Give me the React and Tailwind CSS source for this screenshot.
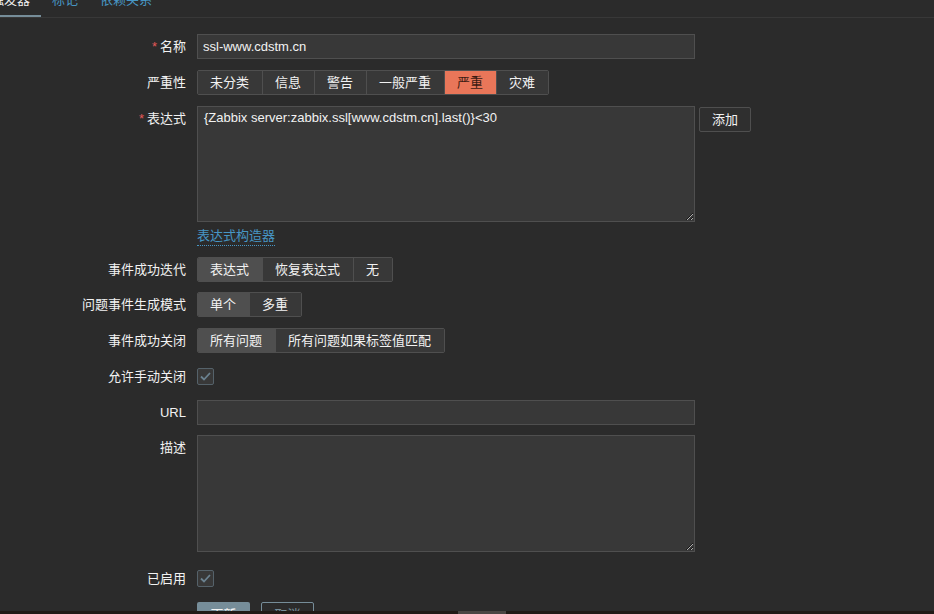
import React from 'react'

const font = { fontFamily: '"Liberation Sans", Arial, "Noto Sans CJK SC", sans-serif' }

const Label = ({ text, required, className = '' }) => (
  <div className={`w-[186px] shrink-0 text-right text-[13px] leading-[25px] text-[#f2f2f2] ${className}`}>
    {required && <span className="text-[#e45959] mr-[3px]">*</span>}
    {text}
  </div>
)

const Segmented = ({ items, active, activeClass = 'bg-[#4f4f4f]' }) => (
  <div className="flex h-[25px] rounded-[2px] border border-[#4f4f4f] overflow-hidden">
    {items.map((item, i) => (
      <div
        key={item}
        className={`pl-[12px] pr-[13px] leading-[23px] text-[13px] ${i > 0 ? 'border-l border-[#4f4f4f]' : ''} ${
          i === active ? activeClass : 'bg-[#383838] text-[#f2f2f2]'
        }`}
      >
        {item}
      </div>
    ))}
  </div>
)

const Checkbox = () => (
  <div className="w-[17px] h-[17px] rounded-[2px] border border-[#55626a] bg-[#383838] flex items-center justify-center">
    <svg width="11" height="9" viewBox="0 0 11 9" fill="none">
      <path d="M1 4.5 L4 7.5 L10 1" stroke="#6b8290" strokeWidth="1.8" />
    </svg>
  </div>
)

export default function App() {
  return (
    <div className="relative w-[934px] h-[614px] overflow-hidden bg-[#2b2b2b] text-[#f2f2f2]" style={font}>
      {/* tabs */}
      <div className="flex -mt-[8px] border-b border-[#383838]">
        <div className="-ml-[20px] px-[11px] pb-[7px] leading-[16px] text-[13px] border-b-2 border-[#768d99] text-[#f2f2f2]">
          触发器
        </div>
        <div className="px-[11px] pb-[9px] leading-[16px] text-[13px] text-[#4796c4]">标记</div>
        <div className="px-[11px] pb-[9px] leading-[16px] text-[13px] text-[#4796c4]">依赖关系</div>
      </div>

      <div className="pt-[16px] flex flex-col">
        {/* name */}
        <div className="flex">
          <Label text="名称" required />
          <input
            readOnly
            value="ssl-www.cdstm.cn"
            className="ml-[11px] w-[498px] h-[25px] px-[5px] bg-[#383838] border border-[#4f4f4f] text-[13px] text-[#f2f2f2] outline-none"
            style={font}
          />
        </div>

        {/* severity */}
        <div className="flex mt-[11px]">
          <Label text="严重性" />
          <div className="ml-[11px]">
            <Segmented
              items={['未分类', '信息', '警告', '一般严重', '严重', '灾难']}
              active={4}
              activeClass="bg-[#e97659] text-[#3a1a12]"
            />
          </div>
        </div>

        {/* expression */}
        <div className="flex mt-[11px]">
          <Label text="表达式" required />
          <div className="ml-[11px] flex flex-col">
            <div className="flex items-start">
              <textarea
                readOnly
                value="{Zabbix server:zabbix.ssl[www.cdstm.cn].last()}<30"
                className="w-[498px] h-[116px] px-[6px] py-[3px] bg-[#383838] border border-[#4f4f4f] text-[13px] leading-[16px] text-[#f2f2f2] outline-none"
                style={font}
              />
              <div className="ml-[4px] mt-[1px] h-[25px] px-[12px] leading-[23px] text-[13px] rounded-[2px] border border-[#4f4f4f] bg-[#2f2f2f]">
                添加
              </div>
            </div>
            <div className="mt-[5px] self-start text-[13px] leading-[18px] text-[#4796c4] border-b border-dotted border-[#4796c4]">
              表达式构造器
            </div>
          </div>
        </div>

        {/* ok event generation */}
        <div className="flex mt-[11px]">
          <Label text="事件成功迭代" />
          <div className="ml-[11px]">
            <Segmented items={['表达式', '恢复表达式', '无']} active={0} />
          </div>
        </div>

        <div className="flex mt-[10px]">
          <Label text="问题事件生成模式" />
          <div className="ml-[11px]">
            <Segmented items={['单个', '多重']} active={0} />
          </div>
        </div>

        <div className="flex mt-[11px]">
          <Label text="事件成功关闭" />
          <div className="ml-[11px]">
            <Segmented items={['所有问题', '所有问题如果标签值匹配']} active={0} />
          </div>
        </div>

        <div className="flex mt-[11px] items-center">
          <Label text="允许手动关闭" />
          <div className="ml-[11px]">
            <Checkbox />
          </div>
        </div>

        {/* url */}
        <div className="flex mt-[11px]">
          <Label text="URL" />
          <input
            readOnly
            value=""
            className="ml-[11px] w-[498px] h-[25px] px-[5px] bg-[#383838] border border-[#4f4f4f] text-[13px] outline-none"
          />
        </div>

        {/* description */}
        <div className="flex mt-[10px]">
          <Label text="描述" />
          <textarea
            readOnly
            value=""
            className="ml-[11px] w-[498px] h-[117px] px-[5px] bg-[#383838] border border-[#4f4f4f] text-[13px] outline-none"
          />
        </div>

        <div className="flex mt-[14px] items-center">
          <Label text="已启用" />
          <div className="ml-[11px]">
            <Checkbox />
          </div>
        </div>

        {/* buttons */}
        <div className="flex mt-[11px]">
          <div className="w-[186px] shrink-0" />
          <div className="ml-[11px] flex gap-[11px]">
            <div className="w-[53px] h-[25px] rounded-[2px] bg-[#768d99] text-center leading-[25px] text-[13px] text-[#f2f2f2]">
              更新
            </div>
            <div className="w-[53px] h-[25px] rounded-[2px] border border-[#768d99] text-center leading-[23px] text-[13px] text-[#768d99]">
              取消
            </div>
          </div>
        </div>
      </div>

      {/* horizontal scrollbar strip */}
      <div className="absolute left-0 right-0 bottom-0 h-[3px] bg-[#211b17]">
        <div className="absolute left-[458px] w-[48px] top-0 h-[3px] bg-[#4a4644]" />
      </div>
    </div>
  )
}
